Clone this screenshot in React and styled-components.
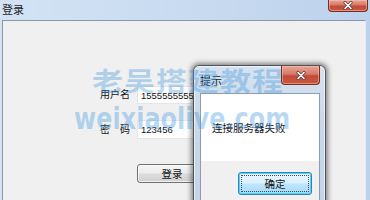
import React from "react";
import styled, { createGlobalStyle } from "styled-components";

const GlobalStyle = createGlobalStyle`
  html, body { margin: 0; padding: 0; overflow: hidden; }
  body { font-family: "Noto Sans CJK SC", "Liberation Sans", sans-serif; }
`;

const CJK = `"Noto Sans CJK SC", "Noto Sans CJK JP", sans-serif`;

const Screen = styled.div`
  position: relative;
  width: 370px;
  height: 200px;
  overflow: hidden;
  background: #f0f0f0;
`;

const Window = styled.div`
  display: flex;
  flex-direction: column;
  width: 370px;
  height: 200px;
  background: linear-gradient(90deg, #d3e3f5 0%, #c6d9ef 60%, #bcd2ec 100%);
`;

const TitleBar = styled.div`
  height: 20px;
  display: flex;
  justify-content: space-between;
  align-items: flex-start;
  flex-shrink: 0;
`;

const Title = styled.span`
  font-family: ${CJK};
  font-size: 11px;
  line-height: 12px;
  color: #1e1e1e;
  padding: 3px 0 0 2px;
`;

const CloseBtn = styled.div`
  width: ${(p) => p.$w}px;
  height: ${(p) => p.$h}px;
  margin-right: ${(p) => p.$mr}px;
  box-sizing: border-box;
  border: 1px solid #7a2a1f;
  border-top: none;
  border-radius: 0 0 4px 4px;
  background: linear-gradient(180deg, #e6a696 0%, #d67a6a 45%, #c24a38 55%, #c85a40 100%);
  box-shadow: inset 0 0 0 1px rgba(255, 200, 190, 0.5);
  display: flex;
  align-items: center;
  justify-content: center;
`;

const XIcon = ({ size }) => (
  <svg width={size} height={size - 1} viewBox="0 0 10 9">
    <path d="M2 1.5 L8 7.5 M8 1.5 L2 7.5" stroke="#5a3c3c" strokeWidth="3" strokeLinecap="round" />
    <path d="M2 1.5 L8 7.5 M8 1.5 L2 7.5" stroke="#ffffff" strokeWidth="1.6" strokeLinecap="round" />
  </svg>
);

const Client = styled.div`
  flex: 1;
  margin: 0 4px 0 2px;
  background: #f0f0f0;
  border-top: 1px solid #8697ab;
  border-left: 1px solid #8697ab;
  border-right: 1px solid #e4edf7;
  display: flex;
  flex-direction: column;
  padding: 65px 0 0 97px;
`;

const Row = styled.div`
  display: flex;
  align-items: center;
  gap: 7px;
  margin-bottom: ${(p) => p.$mb}px;
`;

const Label = styled.span`
  width: 30px;
  flex-shrink: 0;
  white-space: nowrap;
  font-family: ${CJK};
  font-size: 10px;
  line-height: 12px;
  color: #111;
  display: flex;
  justify-content: space-between;
  margin-top: ${(p) => p.$mt}px;
`;

const Input = styled.div`
  width: 140px;
  height: ${(p) => p.$h}px;
  background: #ffffff;
  box-sizing: border-box;
  border: 1px solid #e2e6ea;
  font-family: "Liberation Sans", sans-serif;
  font-size: 9.5px;
  color: #111;
  display: flex;
  align-items: center;
  padding-left: 3px;
  overflow: hidden;
  white-space: nowrap;
`;

const Button = styled.div`
  width: ${(p) => p.$w}px;
  height: ${(p) => p.$h}px;
  box-sizing: border-box;
  border-radius: 3px;
  font-family: ${CJK};
  font-size: 10.5px;
  color: #111;
  display: flex;
  align-items: center;
  justify-content: center;
  margin-left: ${(p) => p.$ml || 0}px;
`;

const PlainButton = styled(Button)`
  border: 1px solid #707070;
  background: linear-gradient(180deg, #f6f6f6 0%, #ebebeb 48%, #dddddd 52%, #cfcfcf 100%);
  box-shadow: inset 0 0 0 1px rgba(255, 255, 255, 0.7);
`;

const DefaultButton = styled(Button)`
  border: 1px solid #3c7fb1;
  background: linear-gradient(180deg, #eaf6fd 0%, #d9f0fc 48%, #bee6fd 52%, #a7d9f5 100%);
  box-shadow: inset 0 0 0 1px #48d5fe;
  position: relative;
  &::after {
    content: "";
    position: absolute;
    inset: 2px;
    border: 1px dotted #3a4a5a;
    border-radius: 1px;
  }
`;

const Dialog = styled.div`
  position: absolute;
  left: 193px;
  top: 65px;
  width: 133px;
  height: 150px;
  box-sizing: border-box;
  border: 1px solid rgba(40, 40, 40, 0.75);
  border-radius: 6px 6px 0 0;
  background: linear-gradient(180deg, #d6e2ef 0%, #c9d8e8 40%, #c4d4e6 100%);
  box-shadow: 0 0 5px 2px rgba(0, 0, 0, 0.45), inset 0 0 0 1px rgba(255, 255, 255, 0.6);
  display: flex;
  flex-direction: column;
`;

const DialogTitleBar = styled.div`
  height: 27px;
  display: flex;
  justify-content: space-between;
  align-items: flex-start;
  flex-shrink: 0;
`;

const DialogTitle = styled(Title)`
  padding: 8px 0 0 6px;
`;

const DialogClient = styled.div`
  flex: 1;
  margin: 0 5px 0 6px;
  border: 1px solid #8a9db3;
  border-bottom: none;
  background: #f0f0f0;
  display: flex;
  flex-direction: column;
`;

const Message = styled.div`
  height: 67px;
  background: #ffffff;
  display: flex;
  align-items: center;
  padding-left: 11px;
  font-family: ${CJK};
  font-size: 10.5px;
  color: #111;
`;

const ButtonBar = styled.div`
  display: flex;
  justify-content: flex-end;
  padding: 11px 7px 0 0;
`;

const Watermark = styled.div`
  position: absolute;
  left: ${(p) => p.$x}px;
  top: ${(p) => p.$y}px;
  pointer-events: none;
  white-space: nowrap;
  color: rgba(70, 155, 225, 0.38);
  font-weight: 700;
  font-family: ${(p) => p.$font};
  font-size: ${(p) => p.$size}px;
  letter-spacing: ${(p) => p.$ls}px;
  line-height: 1;
  transform: scale(${(p) => p.$sx}, ${(p) => p.$sy});
  transform-origin: top left;
`;

export default function App() {
  return (
    <Screen>
      <GlobalStyle />
      <Window>
        <TitleBar>
          <Title>登录</Title>
          <CloseBtn $w={40} $h={12} $mr={2}>
            <XIcon size={10} />
          </CloseBtn>
        </TitleBar>
        <Client>
          <Row $mb={16}>
            <Label $mt={-3}>
              <span>用</span>
              <span>户</span>
              <span>名</span>
            </Label>
            <Input $h={18}>155555555555555</Input>
          </Row>
          <Row $mb={25}>
            <Label $mt={-2}>
              <span>密</span>
              <span>码</span>
            </Label>
            <Input $h={19}>123456</Input>
          </Row>
          <PlainButton $w={70} $h={19} $ml={37}>登录</PlainButton>
        </Client>
      </Window>

      <Dialog>
        <DialogTitleBar>
          <DialogTitle>提示</DialogTitle>
          <CloseBtn $w={39} $h={19} $mr={5}>
            <XIcon size={10} />
          </CloseBtn>
        </DialogTitleBar>
        <DialogClient>
          <Message>连接服务器失败</Message>
          <ButtonBar>
            <DefaultButton $w={74} $h={23}>确定</DefaultButton>
          </ButtonBar>
        </DialogClient>
      </Dialog>

      <Watermark $x={92} $y={66} $size={31} $ls={1} $sx={1} $sy={0.85} $font={CJK}>
        老吴搭建教程
      </Watermark>
      <Watermark $x={74} $y={104} $size={30} $ls={0} $sx={0.8} $sy={1} $font={`"DejaVu Sans", sans-serif`}>
        weixiaolive.com
      </Watermark>
    </Screen>
  );
}
